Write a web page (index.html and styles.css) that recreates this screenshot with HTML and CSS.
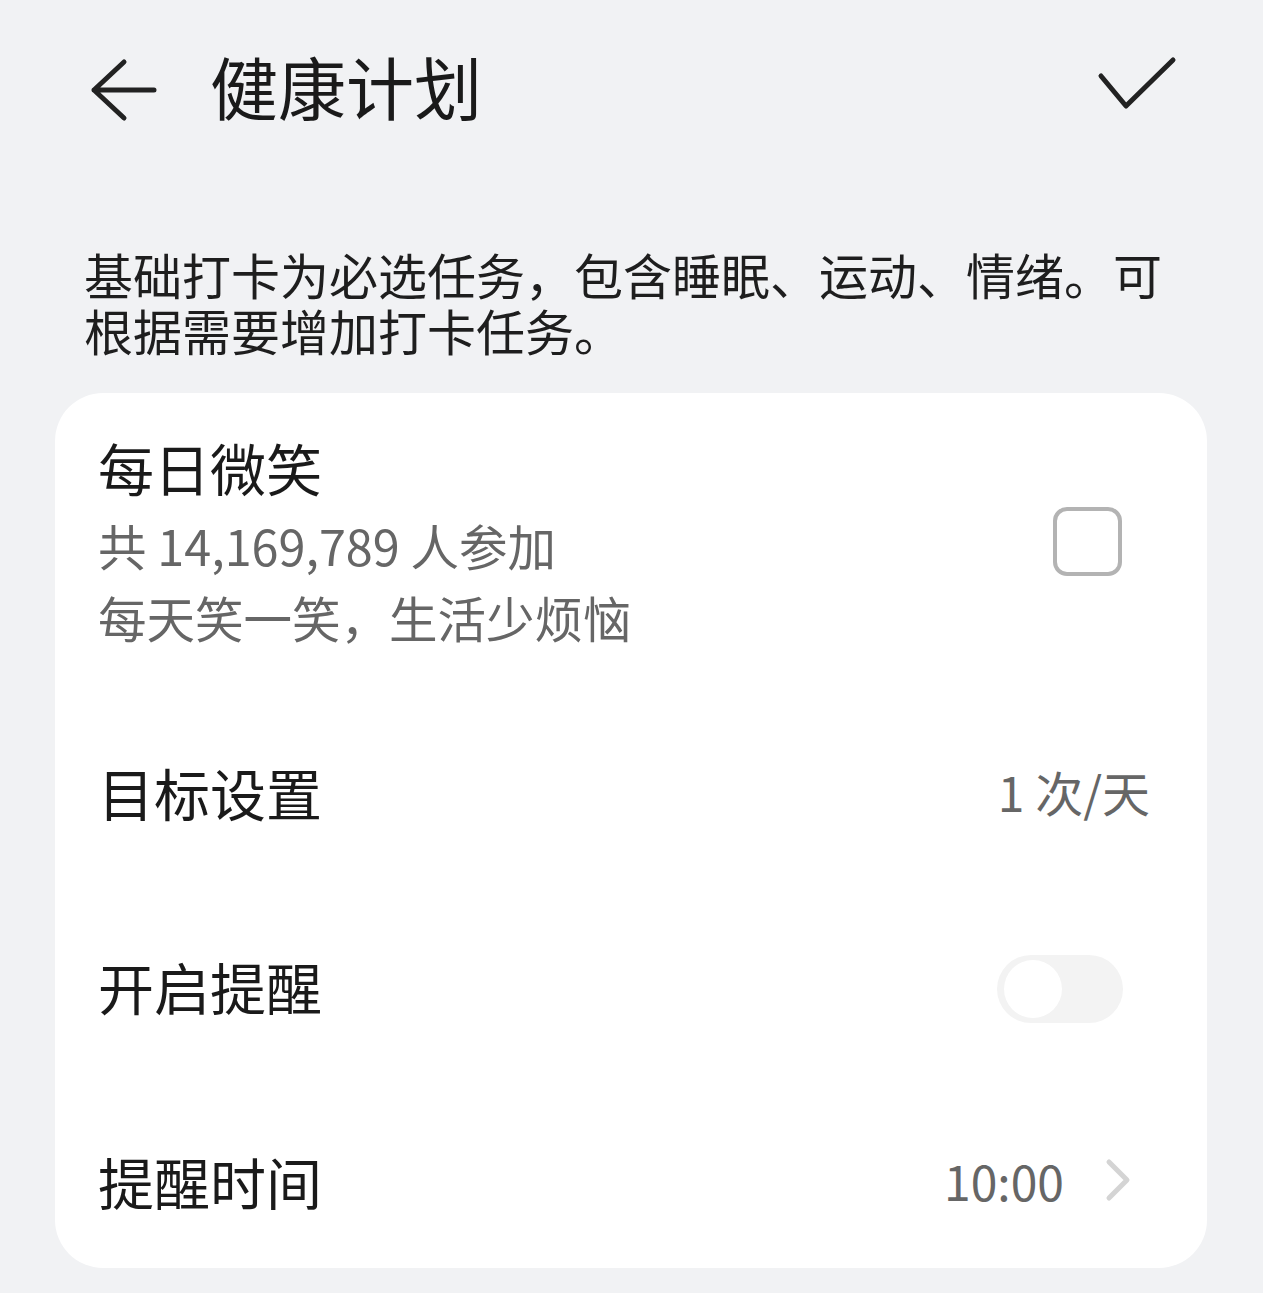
FILE: index.html
```html
<!DOCTYPE html>
<html lang="zh-CN">
  <head>
    <meta name="viewport" content="width=device-width, initial-scale=1.0">
    <link rel="stylesheet" href="styles.css">
  </head>
  <body>
    <header class="topBar">
      <svg class="backIcon" width="72" height="64" viewBox="0 0 72 64">
        <path d="M36 4 L6 32 L36 60 M6 32 L66 32" fill="none" stroke="#222" stroke-width="5" stroke-linecap="round" stroke-linejoin="round"/>
      </svg>
      <h1 class="pageTitle">健康计划</h1>
      <svg class="doneIcon" width="80" height="56" viewBox="0 0 80 56">
        <path d="M4 20 L29 50 L76 4" fill="none" stroke="#222" stroke-width="5" stroke-linecap="round" stroke-linejoin="round"/>
      </svg>
    </header>
    <p class="intro">基础打卡为必选任务，包含睡眠、运动、情绪。可根据需要增加打卡任务。</p>
    <section class="card">
      <div class="taskRow">
        <div class="taskText">
          <div class="taskName">每日微笑</div>
          <div class="taskSub">共 14,169,789 人参加</div>
          <div class="taskSub">每天笑一笑，生活少烦恼</div>
        </div>
        <div class="checkBox"></div>
      </div>
      <div class="settingRow">
        <span class="settingLabel">目标设置</span>
        <span class="settingValue">1 次/天</span>
      </div>
      <div class="settingRow">
        <span class="settingLabel">开启提醒</span>
        <div class="switch"><div class="knob"></div></div>
      </div>
      <div class="settingRow lastRow">
        <span class="settingLabel">提醒时间</span>
        <span class="settingValue timeValue">10:00</span>
        <svg class="chevron" width="28" height="44" viewBox="0 0 28 44">
          <path d="M5 4 L23 22 L5 40" fill="none" stroke="#d4d4d4" stroke-width="5" stroke-linecap="round" stroke-linejoin="round"/>
        </svg>
      </div>
    </section>
  </body>
</html>
```
FILE: styles.css
```css
body{
  margin: 0;
  background-color: #f1f2f4;
  font-family: "Noto Sans CJK SC", "Noto Sans", sans-serif;
  color: #1a1a1a;
}
.topBar{
  display: flex;
  align-items: center;
  height: 180px;
  padding: 0 86px 0 88px;
}
.backIcon{
  flex-shrink: 0;
}
.pageTitle{
  margin: -8px 0 0 50px;
  flex: 1;
  font-size: 68px;
  font-weight: 400;
  line-height: 1;
}
.doneIcon{
  margin-top: -12px;
}
.intro{
  margin: 66px 80px 0 84px;
  font-size: 49px;
  line-height: 56px;
  color: #1e1e1e;
}
.card{
  margin: 35px 56px 0 55px;
  background-color: #fff;
  border-radius: 48px;
  padding: 0 57px 0 43px;
}
.taskRow{
  display: flex;
  align-items: flex-start;
  padding-top: 36px;
  margin-bottom: 45px;
}
.taskText{
  flex: 1;
}
.taskName{
  font-size: 56px;
  line-height: 76px;
  margin-bottom: 4px;
}
.taskSub{
  font-size: 48.5px;
  line-height: 72px;
  color: #666;
}
.checkBox{
  width: 61px;
  height: 61px;
  border: 4px solid #b3b3b3;
  border-radius: 14px;
  margin: 78px 28px 0 0;
}
.settingRow{
  display: flex;
  align-items: center;
  height: 194px;
  padding-bottom: 8px;
  box-sizing: border-box;
}
.lastRow{
  height: 182px;
  padding: 6px 0 0;
}
.settingLabel{
  flex: 1;
  font-size: 56px;
}
.settingValue{
  font-size: 48px;
  color: #666;
}
.timeValue{
  margin-right: 40px;
}
.chevron{
  margin-right: 18px;
}
.switch{
  width: 126px;
  height: 68px;
  border-radius: 34px;
  background-color: #f3f3f3;
  margin: 8px 27px 0 0;
  display: flex;
  align-items: center;
  padding-left: 7px;
  box-sizing: border-box;
}
.knob{
  width: 58px;
  height: 58px;
  border-radius: 50%;
  background-color: #fff;
}
```
